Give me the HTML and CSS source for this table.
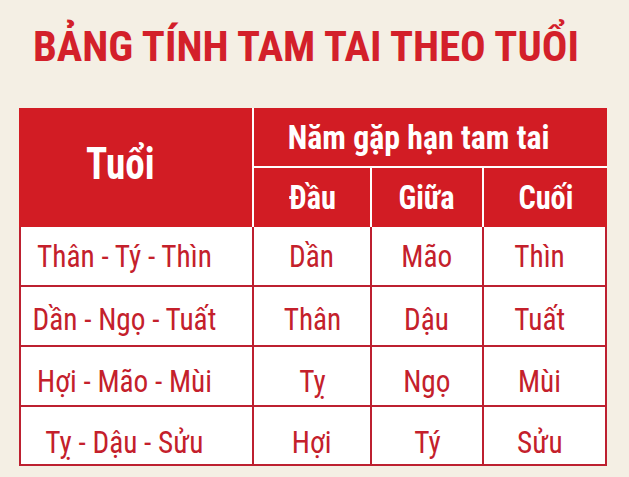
FILE: index.html
```html
<!DOCTYPE html>
<html lang="vi">
<head>
<meta charset="utf-8">
<title>Bảng tính tam tai theo tuổi</title>
<link rel="stylesheet" href="styles.css">
</head>
<body>
<div class="page">
  <h1 class="title"><span class="sx">BẢNG TÍNH TAM TAI THEO TUỔI</span></h1>
  <div class="table">
    <div class="head">
      <div class="hcell tuoi"><span class="sx">Tuổi</span></div>
      <div class="hcell nam"><span class="sx">Năm gặp hạn tam tai</span></div>
      <div class="hcell sub"><span class="sx">Đầu</span></div>
      <div class="hcell sub"><span class="sx">Giữa</span></div>
      <div class="hcell sub last"><span class="sx">Cuối</span></div>
    </div>
    <div class="body">
      <div class="row r1">
        <div class="cell first"><span class="sx">Thân - Tý - Thìn</span></div>
        <div class="cell"><span class="sx">Dần</span></div>
        <div class="cell"><span class="sx">Mão</span></div>
        <div class="cell last"><span class="sx">Thìn</span></div>
      </div>
      <div class="row r2">
        <div class="cell first"><span class="sx">Dần - Ngọ - Tuất</span></div>
        <div class="cell"><span class="sx">Thân</span></div>
        <div class="cell"><span class="sx">Dậu</span></div>
        <div class="cell last"><span class="sx">Tuất</span></div>
      </div>
      <div class="row r3">
        <div class="cell first"><span class="sx">Hợi - Mão - Mùi</span></div>
        <div class="cell"><span class="sx">Tỵ</span></div>
        <div class="cell"><span class="sx">Ngọ</span></div>
        <div class="cell last"><span class="sx">Mùi</span></div>
      </div>
      <div class="row r4">
        <div class="cell first"><span class="sx">Tỵ - Dậu - Sửu</span></div>
        <div class="cell"><span class="sx">Hợi</span></div>
        <div class="cell"><span class="sx">Tý</span></div>
        <div class="cell last"><span class="sx">Sửu</span></div>
      </div>
    </div>
  </div>
</div>
</body>
</html>
```
FILE: styles.css
```css
html, body {
  margin: 0;
  padding: 0;
  background: #f4efe4;
}
body {
  font-family: Roboto, "Liberation Sans", sans-serif;
  font-stretch: condensed;
}
.page {
  width: 629px;
  height: 477px;
  overflow: hidden;
  padding-top: 22px;
  box-sizing: border-box;
}
.sx {
  display: inline-block;
  white-space: nowrap;
  transform-origin: center center;
}
.title {
  margin: 0 0 0 33px;
  height: 50px;
  font-size: 42px;
  line-height: 50px;
  font-weight: 700;
  color: #d3202a;
  letter-spacing: 0;
}
.title .sx {
  transform-origin: left center;
  transform: scaleX(1.013);
}
.table {
  margin: 36px 0 0 19px;
  width: 588px;
}
.head {
  display: grid;
  grid-template-columns: 233px 116px 110px 123px;
  grid-template-rows: 58px 59px;
  gap: 2px;
  background: #ffffff;
}
.hcell {
  background: #d21c24;
  color: #ffffff;
  font-weight: 700;
  display: flex;
  align-items: center;
  justify-content: center;
  line-height: 1;
}
.tuoi {
  grid-row: 1 / span 2;
  font-size: 45px;
  padding-right: 30px;
  padding-bottom: 8px;
}
.tuoi .sx {
  transform: scaleX(0.87);
}
.nam {
  grid-column: 2 / span 3;
  font-size: 33px;
  padding-right: 24px;
}
.nam .sx {
  transform: scaleX(0.965);
}
.sub {
  font-size: 33px;
}
.sub .sx {
  transform: scaleX(0.92);
}
.body {
  display: flex;
  flex-direction: column;
  gap: 2px;
  background: #bd2030;
  padding: 0 2px 2px 2px;
}
.row {
  display: grid;
  grid-template-columns: 231px 116px 110px 121px;
  gap: 2px;
  height: 58px;
}
.r4 {
  height: 57px;
}
.cell {
  background: #ffffff;
  color: #c4202b;
  font-size: 32px;
  line-height: 1;
  display: flex;
  align-items: center;
  justify-content: center;
}
.cell .sx {
  transform: scaleX(0.915);
}
.cell.first {
  padding-right: 24px;
}
.cell.last {
  padding-right: 10px;
}
.r2 .cell { padding-top: 6px; }
.r3 .cell { padding-top: 9px; }
.r4 .cell { padding-top: 12px; }
```
